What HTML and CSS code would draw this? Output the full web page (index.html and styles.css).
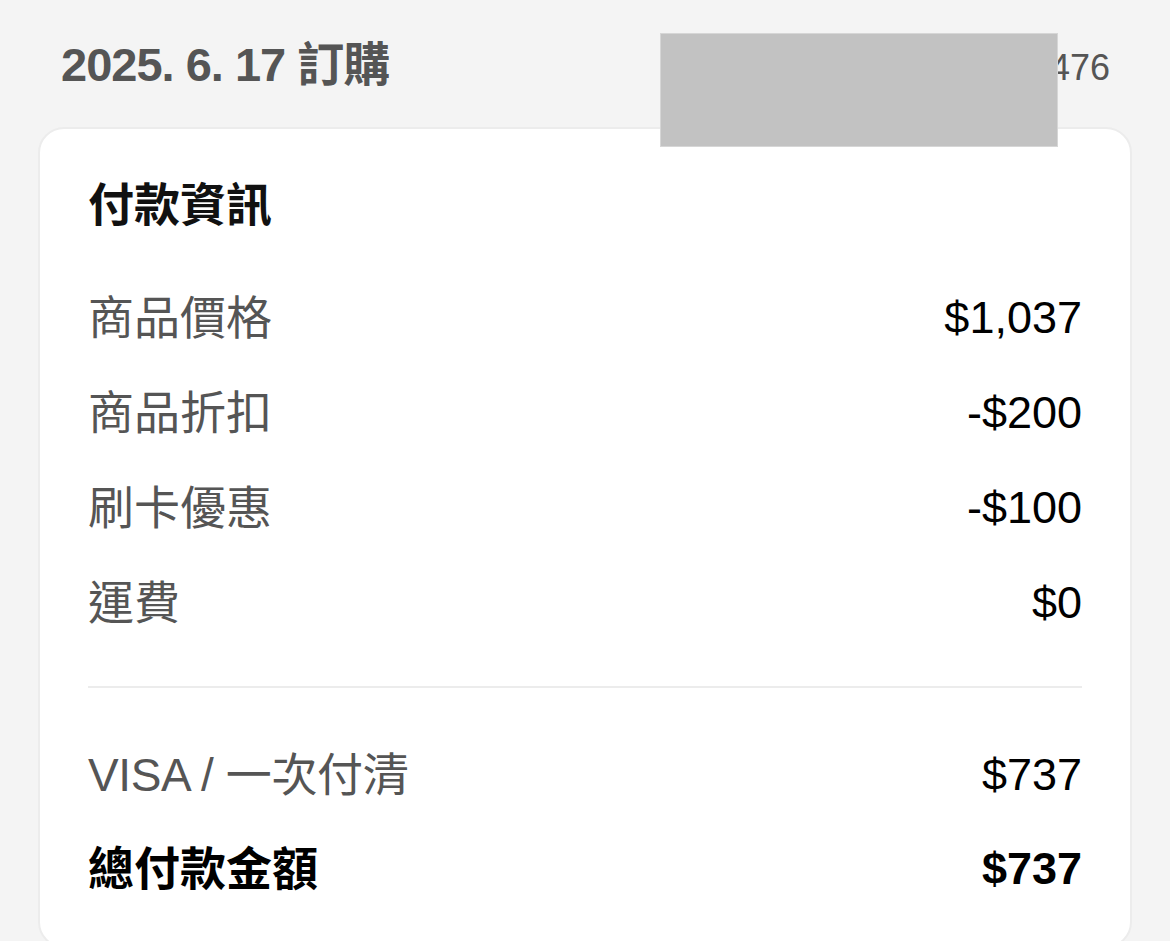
FILE: index.html
```html
<!DOCTYPE html>
<html lang="zh-Hant">
<head>
<meta charset="utf-8">
<title>付款資訊</title>
<link rel="stylesheet" href="styles.css">
</head>
<body>
<header class="order-head">
  <h1 class="order-date">2025. 6. 17 訂購</h1>
  <span class="order-no">476</span>
  <div class="redact"></div>
</header>
<section class="card">
  <h2 class="card-title">付款資訊</h2>
  <div class="rows">
    <div class="row"><span class="label">商品價格</span><span class="value">$1,037</span></div>
    <div class="row"><span class="label">商品折扣</span><span class="value">-$200</span></div>
    <div class="row"><span class="label">刷卡優惠</span><span class="value">-$100</span></div>
    <div class="row"><span class="label">運費</span><span class="value">$0</span></div>
  </div>
  <hr class="divider">
  <div class="rows totals">
    <div class="row"><span class="label pay">VISA / 一次付清</span><span class="value">$737</span></div>
    <div class="row total"><span class="label">總付款金額</span><span class="value">$737</span></div>
  </div>
</section>
</body>
</html>
```
FILE: styles.css
```css
* { box-sizing: border-box; }
html, body { margin: 0; padding: 0; }
body {
  background: #f4f4f4;
  font-family: "Liberation Sans", "Noto Sans CJK TC", sans-serif;
  color: #000;
  width: 1170px;
  height: 941px;
  overflow: hidden;
}
.order-head {
  position: relative;
  display: flex;
  justify-content: space-between;
  align-items: flex-start;
  padding: 36px 60px 0 61px;
  height: 127px;
}
.order-date {
  margin: 0;
  font-size: 47px;
  line-height: 58px;
  font-weight: 700;
  color: #555;
  letter-spacing: -1px;
}
.order-no {
  font-size: 36px;
  line-height: 64px;
  color: #555;
}
.redact {
  position: absolute;
  left: 660px;
  top: 33px;
  width: 398px;
  height: 114px;
  background: #c2c2c2;
  border: 1px solid #d6d6d6;
  z-index: 2;
}
.card {
  margin: 0 38px;
  background: #fff;
  border: 2px solid #ececec;
  border-radius: 26px;
  padding: 46px 48px 30px 48px;
}
.card-title {
  margin: 0 0 35px 0;
  font-size: 46px;
  line-height: 60px;
  font-weight: 700;
  color: #111;
}
.rows { display: flex; flex-direction: column; }
.row {
  display: flex;
  justify-content: space-between;
  align-items: center;
  height: 95px;
}
.label {
  font-size: 46px;
  color: #555;
  line-height: 56px;
}
.label.pay { letter-spacing: -0.4px; }
.value {
  font-size: 45px;
  color: #000;
  line-height: 56px;
}
.divider {
  border: 0;
  height: 2px;
  background: #ececec;
  margin: 36px 0 0 0;
}
.totals { margin-top: 40px; }
.totals .row { height: 94px; }
.total .label, .total .value {
  font-weight: 700;
  color: #000;
}
```
